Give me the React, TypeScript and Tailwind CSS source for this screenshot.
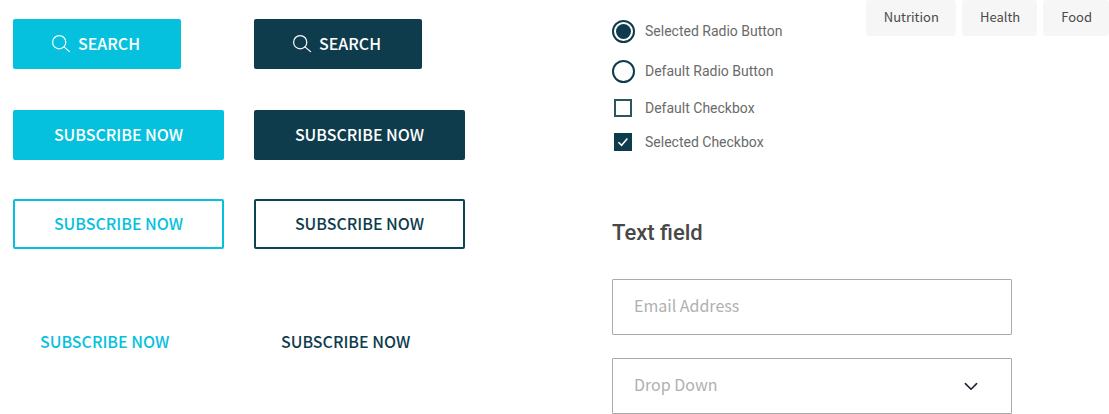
import { useState } from "react";
import type { ReactNode } from "react";

const sourceFont = "font-['Noto_Sans_CJK_SC',sans-serif]";

type Tone = "cyan" | "navy";

const filled: Record<Tone, string> = {
  cyan: "bg-[#06c1de] text-white",
  navy: "bg-[#0e3c4c] text-white",
};
const outlined: Record<Tone, string> = {
  cyan: "border-2 border-[#06c1de] text-[#06c1de]",
  navy: "border-2 border-[#0b4555] text-[#0e3c4c]",
};
const plain: Record<Tone, string> = {
  cyan: "text-[#06c1de]",
  navy: "text-[#0e3c4c]",
};

function SearchIcon() {
  return (
    <svg className="h-5 w-5 shrink-0" viewBox="0 0 20 20" fill="none" stroke="currentColor" strokeWidth="1.2" strokeLinecap="round" aria-hidden="true">
      <circle cx="8.2" cy="9.2" r="6.6" />
      <path d="M12.9 13.9 18.6 18.6" />
    </svg>
  );
}

function Button({ className, children }: { className: string; children: ReactNode }) {
  return (
    <button type="button" className={`flex h-[50px] items-center justify-center rounded-xs pb-[2px] text-base font-medium whitespace-nowrap ${className}`}>
      {children}
    </button>
  );
}

function ButtonColumn({ tone }: { tone: Tone }) {
  return (
    <div className="flex w-[211px] flex-col items-start">
      <Button className={`w-[168px] gap-[7px] pr-[3px] ${filled[tone]}`}>
        <SearchIcon />
        SEARCH
      </Button>
      <Button className={`mt-[41px] w-full ${filled[tone]}`}>SUBSCRIBE NOW</Button>
      <Button className={`mt-[39px] w-full ${outlined[tone]}`}>SUBSCRIBE NOW</Button>
      <Button className={`mt-[68px] px-[27px] ${plain[tone]}`}>SUBSCRIBE NOW</Button>
    </div>
  );
}

function Radio({ label, value, selected, onSelect }: { label: string; value: string; selected: string; onSelect: (value: string) => void }) {
  return (
    <label className="flex items-center gap-[10px]">
      <input
        type="radio"
        name="choice"
        checked={selected === value}
        onChange={() => onSelect(value)}
        className="grid h-[23px] w-[23px] appearance-none place-items-center rounded-full border-2 border-[#0e3c4c] before:h-[15px] before:w-[15px] before:rounded-full checked:before:bg-[#0e3c4c]"
      />
      {label}
    </label>
  );
}

function Checkbox({ label, defaultChecked }: { label: string; defaultChecked?: boolean }) {
  return (
    <label className="flex items-center gap-[10px]">
      <span className="grid w-[23px] items-center justify-items-start pl-[2px]">
        <input
          type="checkbox"
          defaultChecked={defaultChecked}
          className="peer col-start-1 row-start-1 h-[18px] w-[18px] appearance-none border-2 border-[#2c5563] checked:border-[#0e3c4c] checked:bg-[#0e3c4c]"
        />
        <svg className="pointer-events-none invisible col-start-1 row-start-1 h-[18px] w-[18px] peer-checked:visible" viewBox="0 0 18 18" fill="none" stroke="#fff" strokeWidth="1.5" aria-hidden="true">
          <path d="M4.4 9.2 7.6 12.3 13.4 5.6" />
        </svg>
      </span>
      {label}
    </label>
  );
}

export default function App() {
  const [choice, setChoice] = useState("selected");

  return (
    <main className="grid grid-cols-[612fr_497fr] bg-white">
      <section aria-label="Buttons" className={`flex gap-[30px] pt-[19px] pl-[13px] ${sourceFont}`}>
        <ButtonColumn tone="cyan" />
        <ButtonColumn tone="navy" />
      </section>

      <section aria-label="Form controls">
        <div className="flex items-start justify-between">
          <fieldset className="flex flex-col pt-[20px] font-[Roboto,sans-serif] text-sm leading-[17px] text-[#6a6a6a]">
            <Radio label="Selected Radio Button" value="selected" selected={choice} onSelect={setChoice} />
            <div className="mt-[17px]">
              <Radio label="Default Radio Button" value="default" selected={choice} onSelect={setChoice} />
            </div>
            <div className="mt-4">
              <Checkbox label="Default Checkbox" />
            </div>
            <div className="mt-4">
              <Checkbox label="Selected Checkbox" defaultChecked />
            </div>
          </fieldset>
          <nav aria-label="Categories" className={`flex gap-[6px] text-[13px] text-[#4a4a4a] ${sourceFont}`}>
            {["Nutrition", "Health", "Food"].map((tag) => (
              <a key={tag} href="#" className="flex h-9 items-center rounded-sm bg-[#f6f6f6] pr-[17px] pb-[2px] pl-[18px]">
                {tag}
              </a>
            ))}
          </nav>
        </div>

        <h2 className="mt-[66px] font-[Roboto,sans-serif] text-[22px] leading-8 font-medium text-[#484848]">Text field</h2>
        <div className={`mt-[30px] flex max-w-[400px] flex-col gap-[23px] text-base ${sourceFont}`}>
          <input
            type="email"
            aria-label="Email Address"
            placeholder="Email Address"
            className="h-14 w-full rounded-[1px] border border-[#aaa] px-[21px] pb-[5px] placeholder:text-[#b0b0b0]"
          />
          <div className="grid items-center">
            <select aria-label="Drop Down" className="col-start-1 row-start-1 h-14 w-full appearance-none rounded-[1px] border border-[#aaa] bg-white px-[21px] pb-[5px] text-[#b0b0b0]">
              <option>Drop Down</option>
            </select>
            <svg className="pointer-events-none col-start-1 row-start-1 mr-[33px] h-4 w-4 justify-self-end" viewBox="0 0 16 16" fill="none" stroke="#23202f" strokeWidth="1.6" strokeLinecap="round" strokeLinejoin="round" aria-hidden="true">
              <path d="M2.4 5.6 8 11.2 13.6 5.6" />
            </svg>
          </div>
        </div>
      </section>
    </main>
  );
}
